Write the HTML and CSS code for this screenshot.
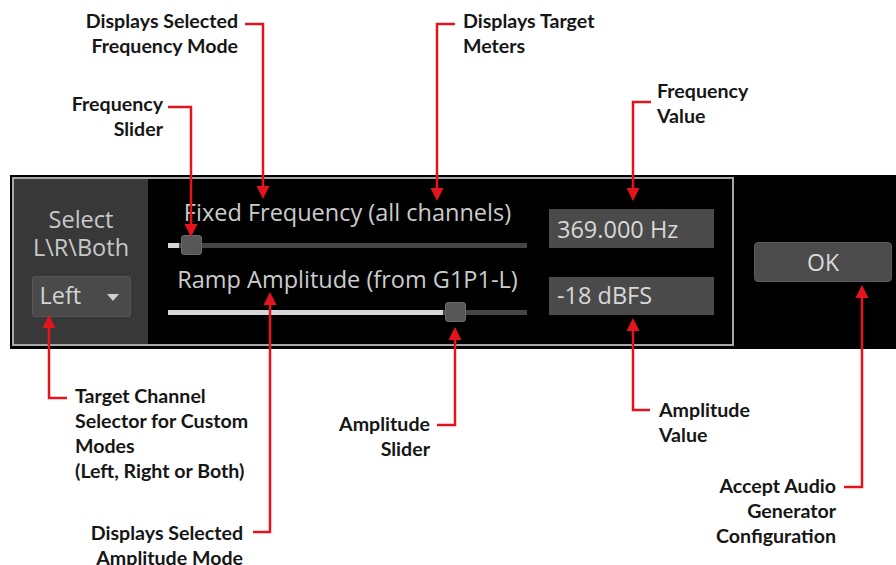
FILE: index.html
```html
<!DOCTYPE html>
<html>
  <head>
    <title>Audio Generator</title>
    <link rel="stylesheet" href="styles.css">
  </head>
  <body>
    <div class="figure">
      <div class="strip">
        <div class="panel">
          <div class="channel">
            <div class="channel-label">Select<br>L\R\Both</div>
            <div class="dropdown"><span>Left</span><span class="caret"></span></div>
          </div>
          <div class="controls">
            <div class="row">
              <div class="slider-col">
                <div class="mode">Fixed Frequency (all channels)</div>
                <div class="slider">
                  <div class="fill" style="width: 3.1%"></div>
                  <div class="thumb" style="left: 3.6%"></div>
                </div>
              </div>
              <div class="value freq">369.000 Hz</div>
            </div>
            <div class="row">
              <div class="slider-col">
                <div class="mode">Ramp Amplitude (from G1P1-L)</div>
                <div class="slider">
                  <div class="fill" style="width: 76.6%"></div>
                  <div class="thumb" style="left: 77.2%"></div>
                </div>
              </div>
              <div class="value amp">-18 dBFS</div>
            </div>
          </div>
        </div>
        <button class="ok">OK</button>
      </div>

      <!-- callouts -->
      <div class="note right" style="top: 8px; right: 658px">Displays Selected<br>Frequency Mode</div>
      <div class="note right" style="top: 91px; right: 733px">Frequency<br>Slider</div>
      <div class="note" style="top: 8px; left: 463px">Displays Target<br>Meters</div>
      <div class="note" style="top: 78px; left: 657px">Frequency<br>Value</div>
      <div class="note" style="top: 383px; left: 75px">Target Channel<br>Selector for Custom<br>Modes<br>(Left, Right or Both)</div>
      <div class="note right" style="top: 520px; right: 653px">Displays Selected<br>Amplitude Mode</div>
      <div class="note right" style="top: 411px; right: 466px">Amplitude<br>Slider</div>
      <div class="note" style="top: 397px; left: 659px">Amplitude<br>Value</div>
      <div class="note right" style="top: 473px; right: 60px">Accept Audio<br>Generator<br>Configuration</div>

      <svg class="leaders" width="896" height="565" viewBox="0 0 896 565">
        <g fill="none" stroke="#e3141e" stroke-width="2.5">
          <path d="M245 24H263V188" />
          <path d="M168 107H191V226" />
          <path d="M455 24H437V190" />
          <path d="M651 102H633V190" />
          <path d="M67 398H49V326" />
          <path d="M253 532H270V303" />
          <path d="M437 425H455V338" />
          <path d="M650 410H633V329" />
          <path d="M844 487H862V296" />
        </g>
        <g fill="#e3141e">
          <polygon points="256.5,186 269.5,186 263,199" />
          <polygon points="184.5,224 197.5,224 191,237" />
          <polygon points="430.5,188 443.5,188 437,201" />
          <polygon points="626.5,188 639.5,188 633,201" />
          <polygon points="42.5,328 55.5,328 49,315" />
          <polygon points="263.5,305 276.5,305 270,292" />
          <polygon points="448.5,340 461.5,340 455,327" />
          <polygon points="626.5,331 639.5,331 633,318" />
          <polygon points="855.5,298 868.5,298 862,285" />
        </g>
      </svg>
    </div>
  </body>
</html>
```

FILE: styles.css
```css
body {
  margin: 0;
  background: #ffffff;
  font-family: "Open Sans", "Noto Sans", sans-serif;
}
.figure {
  position: relative;
  width: 896px;
  height: 565px;
  overflow: hidden;
  background: #ffffff;
}
.strip {
  margin: 175px 0 0 10px;
  height: 174px;
  box-sizing: border-box;
  padding: 2px 0 3px 2px;
  background: #000000;
  display: flex;
}
.panel {
  width: 722px;
  height: 169px;
  box-sizing: border-box;
  border: 2px solid #a8a8a8;
  background: #000000;
  display: flex;
}
.channel {
  width: 134px;
  background: #383838;
  padding-top: 26px;
  display: flex;
  flex-direction: column;
  align-items: center;
}
.channel-label {
  color: #c8c8c8;
  font-size: 23.5px;
  line-height: 28px;
  text-align: center;
}
.dropdown {
  margin-top: 15px;
  width: 99px;
  height: 41px;
  box-sizing: border-box;
  padding: 0 11px 4px 7px;
  background: #4a4a4a;
  border: 1px solid #565656;
  border-radius: 3px;
  display: flex;
  align-items: center;
  justify-content: space-between;
  color: #d4d4d4;
  font-size: 23.5px;
}
.caret {
  margin-top: 6px;
  width: 0;
  height: 0;
  border-left: 6px solid transparent;
  border-right: 6px solid transparent;
  border-top: 7px solid #cfcfcf;
}
.controls {
  flex: 1;
  padding: 19px 0 0 20px;
  display: flex;
  flex-direction: column;
  gap: 10px;
}
.row {
  display: flex;
  gap: 22px;
}
.slider-col {
  width: 359px;
}
.mode {
  color: #cccccc;
  font-size: 23.5px;
  line-height: 28px;
  text-align: center;
  white-space: nowrap;
}
.slider {
  position: relative;
  height: 20px;
  margin-top: 9px;
}
.slider::before {
  content: "";
  position: absolute;
  left: 0;
  right: 0;
  top: 8px;
  height: 5px;
  background: #454545;
}
.fill {
  position: absolute;
  left: 0;
  top: 8px;
  height: 5px;
  background: #d6d6d6;
}
.thumb {
  position: absolute;
  top: 0;
  width: 21px;
  height: 20px;
  box-sizing: border-box;
  border: 1px solid #6a6a6a;
  border-radius: 3px;
  background: #575757;
}
.value {
  width: 165px;
  box-sizing: border-box;
  padding-left: 8px;
  background: #4a4a4a;
  color: #d8d8d8;
  font-size: 23.5px;
  display: flex;
  align-items: center;
}
.freq {
  height: 39px;
  margin-top: 11px;
}
.amp {
  height: 38px;
  margin-top: 12px;
  padding-bottom: 2px;
}
.ok {
  align-self: center;
  margin-left: 20px;
  width: 138px;
  height: 40px;
  padding: 0;
  border: 1px solid #5a5a5a;
  border-radius: 4px;
  background: #4b4b4b;
  color: #dadada;
  font-family: "Open Sans", "Noto Sans", sans-serif;
  font-size: 23px;
}
.note {
  position: absolute;
  color: #161616;
  font-family: Lato, "Liberation Sans", sans-serif;
  font-weight: bold;
  font-size: 19.6px;
  line-height: 25px;
  white-space: nowrap;
}
.note.right {
  text-align: right;
}
.leaders {
  position: absolute;
  left: 0;
  top: 0;
  pointer-events: none;
}
```
